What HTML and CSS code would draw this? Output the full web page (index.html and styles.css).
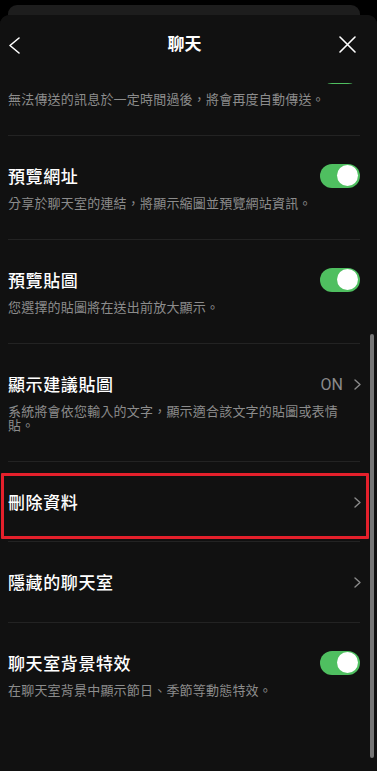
FILE: index.html
```html
<!DOCTYPE html>
<html lang="zh-Hant">
<head>
<meta charset="utf-8">
<title>聊天</title>
<link rel="stylesheet" href="styles.css">
</head>
<body>
<div class="stack">
  <div class="back-card"></div>
  <div class="sheet">
    <header class="header">
      <svg class="icon-back" width="12" height="17" viewBox="0 0 12 17"><path d="M11 1 L2 8.5 L11 16" fill="none" stroke="#fff" stroke-width="1.6" stroke-linecap="round" stroke-linejoin="round"/></svg>
      <h1 class="title">聊天</h1>
      <svg class="icon-close" width="17" height="17" viewBox="0 0 17 17"><path d="M1 1 L16 16 M16 1 L1 16" fill="none" stroke="#fff" stroke-width="1.6" stroke-linecap="round"/></svg>
    </header>
    <div class="list">
      <div class="row first">
        <div class="head end"><span class="toggle"></span></div>
        <p class="desc">無法傳送的訊息於一定時間過後，將會再度自動傳送。</p>
      </div>
      <div class="row">
        <div class="head"><span class="label">預覽網址</span><span class="toggle"></span></div>
        <p class="desc">分享於聊天室的連結，將顯示縮圖並預覽網站資訊。</p>
      </div>
      <div class="row">
        <div class="head"><span class="label">預覽貼圖</span><span class="toggle"></span></div>
        <p class="desc">您選擇的貼圖將在送出前放大顯示。</p>
      </div>
      <div class="row">
        <div class="head"><span class="label">顯示建議貼圖</span><span class="value">ON<svg class="chev" width="7" height="11" viewBox="0 0 7 11"><path d="M1 1 L6 5.5 L1 10" fill="none" stroke="#8a8a8a" stroke-width="1.4" stroke-linecap="round" stroke-linejoin="round"/></svg></span></div>
        <p class="desc">系統將會依您輸入的文字，顯示適合該文字的貼圖或表情貼。</p>
      </div>
      <div class="row highlighted">
        <div class="head"><span class="label">刪除資料</span><svg class="chev" width="7" height="11" viewBox="0 0 7 11"><path d="M1 1 L6 5.5 L1 10" fill="none" stroke="#8a8a8a" stroke-width="1.4" stroke-linecap="round" stroke-linejoin="round"/></svg></div>
        <span class="mark"></span>
      </div>
      <div class="row">
        <div class="head"><span class="label">隱藏的聊天室</span><svg class="chev" width="7" height="11" viewBox="0 0 7 11"><path d="M1 1 L6 5.5 L1 10" fill="none" stroke="#8a8a8a" stroke-width="1.4" stroke-linecap="round" stroke-linejoin="round"/></svg></div>
      </div>
      <div class="row last">
        <div class="head"><span class="label">聊天室背景特效</span><span class="toggle"></span></div>
        <p class="desc">在聊天室背景中顯示節日、季節等動態特效。</p>
      </div>
    </div>
    <span class="scrollbar"></span>
  </div>
</div>
</body>
</html>
```
FILE: styles.css
```css
* { box-sizing: border-box; }
html, body { margin: 0; padding: 0; background: #000; }
body {
  width: 377px;
  height: 771px;
  overflow: hidden;
  font-family: "Noto Sans CJK TC", "Noto Sans", sans-serif;
  color: #fff;
}
.stack { padding-top: 5px; }
.back-card {
  height: 20px;
  margin: 0 17px -10px 8px;
  background: #1d1d1d;
  border-radius: 9px 9px 0 0;
}
.sheet {
  position: relative;
  height: 756px;
  background: #111111;
  border-radius: 9px 9px 0 0;
  overflow: hidden;
}
.header {
  position: relative;
  z-index: 2;
  height: 68px;
  margin-bottom: -1px;
  background: #111111;
  display: flex;
  align-items: flex-start;
  justify-content: space-between;
  padding: 21px 21px 0 8px;
  border-radius: 9px 9px 0 0;
}
.icon-back { margin-top: 1px; }
.title {
  position: absolute;
  left: 0;
  right: 8px;
  top: 17px;
  margin: 0;
  text-align: center;
  font-size: 17px;
  line-height: 22px;
  font-weight: 700;
}
.list {
  height: 689px;
  overflow: hidden;
}
.row {
  position: relative;
  margin: 0 17px 0 8px;
  padding: 29px 0;
  border-bottom: 1px solid #232323;
}
.row.first { margin-top: -50px; }
.row.last { border-bottom: none; }
.head {
  height: 22px;
  display: flex;
  align-items: center;
  justify-content: space-between;
}
.head.end { justify-content: flex-end; }
.label {
  font-size: 17px;
  letter-spacing: 0.6px;
  line-height: 22px;
  font-weight: 500;
}
.desc {
  margin: 9px 12px 0 0;
  font-size: 13px;
  letter-spacing: 0.2px;
  line-height: 14px;
  color: #8c8c8c;
}
.toggle {
  position: relative;
  width: 40px;
  height: 24px;
  border-radius: 12px;
  background: #4fbf60;
}
.toggle::after {
  content: "";
  position: absolute;
  right: 2px;
  top: 1px;
  width: 21px;
  height: 21px;
  border-radius: 50%;
  background: #fff;
}
.value {
  display: flex;
  align-items: center;
  gap: 11px;
  font-family: "Roboto", "Liberation Sans", sans-serif;
  font-size: 16px;
  color: #8a8a8a;
}
.chev { display: block; margin-right: -1px; }
.highlighted { padding: 29px 0 28px; }
.mark {
  position: absolute;
  left: -7px;
  right: -9px;
  top: 11px;
  bottom: 2px;
  border: 3px solid #e5202b;
  border-radius: 1px;
}
.scrollbar {
  position: absolute;
  left: 370px;
  top: 319px;
  width: 4px;
  height: 424px;
  border-radius: 2px;
  background: #767676;
}
```
